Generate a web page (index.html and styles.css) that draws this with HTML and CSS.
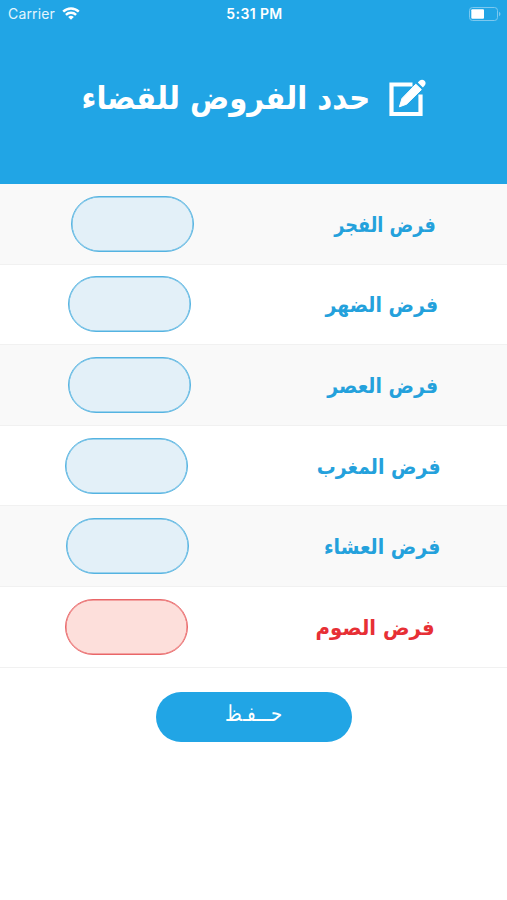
FILE: index.html
```html
<!DOCTYPE html>
<html lang="ar" dir="rtl">
<head>
  <meta charset="UTF-8" />
  <title>حدد الفروض للقضاء</title>
  <link rel="stylesheet" href="styles.css">
</head>
<body>
  <header class="header">
    <div class="status" dir="ltr">
      <div class="carrier">
        <span>Carrier</span>
        <svg width="18" height="13" viewBox="0 0 18 13" fill="none" stroke="#fff" stroke-width="2.4">
          <path d="M1.2 4.7a11 11 0 0 1 15.6 0" />
          <path d="M3.9 7.8a7.2 7.2 0 0 1 10.2 0" />
          <path d="M9 12.8L6.2 10a4 4 0 0 1 5.6 0z" fill="#fff" stroke="none" />
        </svg>
      </div>
      <span class="time">5:31 PM</span>
      <svg class="battery" width="32" height="14" viewBox="0 0 32 14">
        <rect x=".5" y=".5" width="28" height="13" rx="3" fill="none" stroke="#7cc8ef" />
        <rect x="2.3" y="2.3" width="12.7" height="9.4" rx="1" fill="#fff" />
        <path d="M30 4.8c2 .8 2 3.6 0 4.4z" fill="#7cc8ef" />
      </svg>
    </div>
    <div class="title">
      <svg width="39" height="39" viewBox="0 0 39 39">
        <path d="M24.5 5.5H3.5V35H32.5V15.5" fill="none" stroke="#fff" stroke-width="4.2" />
        <path d="M27.8 5.2l5.6 5.4L18.6 25.2l-7.2 2.6 2.6-8.4z" fill="#fff" stroke="#fff" stroke-width="1" stroke-linejoin="round" />
        <path d="M29.8 3.4l2-1.8c1.6-1.3 3.4-1 4.7.2s1.6 3.2.2 4.8l-1.8 2z" fill="#fff" />
      </svg>
      <h1>حدد الفروض للقضاء</h1>
    </div>
  </header>

  <form>
    <div class="row fajr">
      <label for="fajr">فرض الفجر</label>
      <input id="fajr" type="text" />
    </div>
    <div class="row dhuhr">
      <label for="dhuhr">فرض الضهر</label>
      <input id="dhuhr" type="text" />
    </div>
    <div class="row asr">
      <label for="asr">فرض العصر</label>
      <input id="asr" type="text" />
    </div>
    <div class="row maghrib">
      <label for="maghrib">فرض المغرب</label>
      <input id="maghrib" type="text" />
    </div>
    <div class="row isha">
      <label for="isha">فرض العشاء</label>
      <input id="isha" type="text" />
    </div>
    <div class="row fast">
      <label for="fast">فرض الصوم</label>
      <input id="fast" type="text" />
    </div>
    <button type="button"><span>حـــفـظ</span></button>
  </form>
</body>
</html>
```
FILE: styles.css
```css
* {
  box-sizing: border-box;
}
body {
  margin: 0;
  background: #fff;
  font-family: "DejaVu Sans", sans-serif;
}
.header {
  height: 184px;
  background: #21a5e5;
  color: #fff;
}
.status {
  display: grid;
  grid-template-columns: 1fr auto 1fr;
  align-items: center;
  height: 27px;
  padding: 0 6px 0 8px;
  font-family: Inter, sans-serif;
  font-size: 14px;
}
.carrier {
  display: flex;
  align-items: center;
  gap: 7px;
  color: #e4f5fd;
}
.carrier span {
  letter-spacing: 0.15px;
}
.time {
  font-weight: 600;
  letter-spacing: 0.4px;
}
.battery {
  justify-self: end;
}
.title {
  display: flex;
  justify-content: flex-start;
  gap: 18px;
  padding: 52px 80px 0 0;
}
h1 {
  margin: 0;
  font-size: 32px;
  line-height: 38px;
  font-weight: 700;
  white-space: nowrap;
  transform: scaleX(0.91);
  transform-origin: right;
}
.row {
  display: flex;
  justify-content: space-between;
  align-items: center;
  height: 80.6px;
  border-bottom: 1px solid #f1f1f1;
  color: #24a1dc;
}
.row:nth-child(odd) {
  background: #f9f9f9;
}
.row label {
  padding-top: 2px;
  font-size: 21px;
  font-weight: 700;
  white-space: nowrap;
  transform: scaleX(0.9);
  transform-origin: right;
}
.row input {
  width: 123px;
  height: 56px;
  padding: 0 20px;
  border: 1px solid #54b3e1;
  border-radius: 28px;
  background: #e3f0f8;
  box-shadow: inset 0 0 0 0.5px #54b3e1;
  font-size: 20px;
  text-align: center;
  outline: none;
}
.fajr {
  padding: 0 71px;
}
.row.fajr label {
  transform: scaleX(0.84);
}
.dhuhr, .asr {
  padding: 0 69px 0 68px;
}
.maghrib {
  padding: 0 66px 0 65px;
}
.isha {
  padding: 0 67px 0 66px;
}
.fast {
  padding: 0 72px 0 65px;
  color: #e72f35;
}
.row.fast label {
  transform: scaleX(0.94);
}
.row.fast input {
  border-color: #e96668;
  background: #fddfdb;
  box-shadow: inset 0 0 0 0.5px #e96668;
}
button {
  display: block;
  width: 196px;
  height: 50px;
  margin: 24px auto 0;
  padding: 0 0 6px;
  border: none;
  border-radius: 25px;
  background: #21a5e5;
  color: #fff;
  font-family: "DejaVu Sans", sans-serif;
  font-size: 22px;
  font-weight: 200;
  cursor: pointer;
}
button span {
  display: inline-block;
  transform: scaleX(0.82);
}
```
